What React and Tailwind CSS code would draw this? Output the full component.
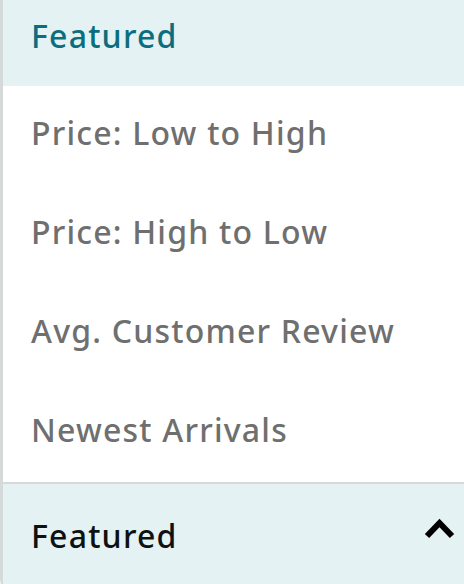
export default function App() {
  const items = ["Price: Low to High", "Price: High to Low", "Avg. Customer Review", "Newest Arrivals"];
  return (
    <div className="h-[584px] w-[464px] overflow-hidden bg-white" style={{ fontFamily: '"Noto Sans", sans-serif' }}>
      <div className="h-[600px] w-[470px] border-l-[3px] border-[#d5d9d9] rounded-bl-[22px] overflow-hidden flex flex-col">
        <div className="h-[86px] shrink-0 bg-[#e4f2f4] flex items-center pl-[28px] pb-[15px]">
          <span className="text-[32px] tracking-[1.2px] font-medium text-[#0b6e7e] leading-none">Featured</span>
        </div>
        {items.map((t) => (
          <div key={t} className="h-[99px] shrink-0 flex items-center pl-[28px] pb-[5px]">
            <span className="text-[32px] tracking-[1.2px] font-medium text-[#6f6f6f] leading-none">{t}</span>
          </div>
        ))}
        <div className="h-[2px] shrink-0 bg-[#d5d9d9]" />
        <div className="flex-1 bg-[#e4f2f4] flex pl-[28px] pr-[14px]">
          <div className="h-[100px] w-full flex items-center justify-between">
            <span className="text-[32px] tracking-[1.2px] font-medium text-[#0f1111] leading-none pt-[3px]">Featured</span>
            <svg width="32" height="24" viewBox="0 0 32 24" className="mb-[10px]">
              <path d="M3 19 L15.5 6 L28 19" fill="none" stroke="#000" strokeWidth="6" />
            </svg>
          </div>
        </div>
      </div>
    </div>
  );
}
